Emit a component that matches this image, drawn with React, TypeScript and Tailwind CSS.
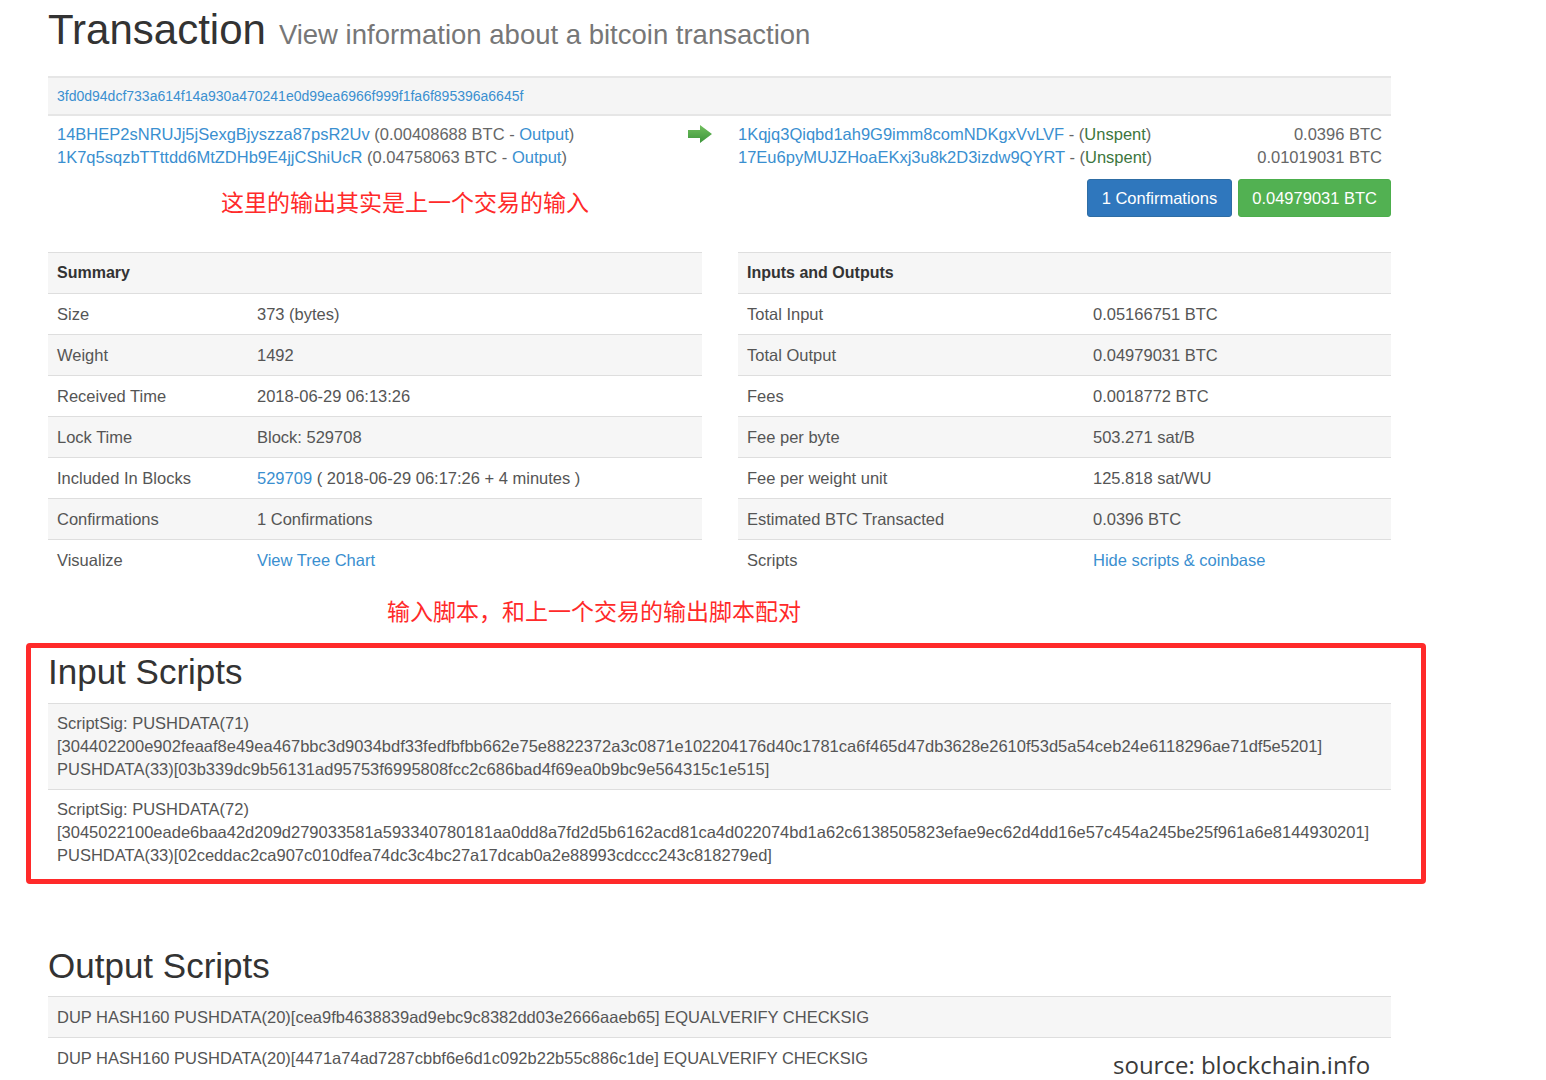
import React from "react";

const LINK = "text-[#3a8fd0]";

interface Row {
  label: string;
  value: React.ReactNode;
}

const summaryRows: Row[] = [
  { label: "Size", value: "373 (bytes)" },
  { label: "Weight", value: "1492" },
  { label: "Received Time", value: "2018-06-29 06:13:26" },
  { label: "Lock Time", value: "Block: 529708" },
  {
    label: "Included In Blocks",
    value: (
      <>
        <span className={LINK}>529709</span> ( 2018-06-29 06:17:26 + 4 minutes )
      </>
    ),
  },
  { label: "Confirmations", value: "1 Confirmations" },
  { label: "Visualize", value: <span className={LINK}>View Tree Chart</span> },
];

const ioRows: Row[] = [
  { label: "Total Input", value: "0.05166751 BTC" },
  { label: "Total Output", value: "0.04979031 BTC" },
  { label: "Fees", value: "0.0018772 BTC" },
  { label: "Fee per byte", value: "503.271 sat/B" },
  { label: "Fee per weight unit", value: "125.818 sat/WU" },
  { label: "Estimated BTC Transacted", value: "0.0396 BTC" },
  { label: "Scripts", value: <span className={LINK}>Hide scripts &amp; coinbase</span> },
];

const inputScripts = [
  [
    "ScriptSig: PUSHDATA(71)",
    "[304402200e902feaaf8e49ea467bbc3d9034bdf33fedfbfbb662e75e8822372a3c0871e102204176d40c1781ca6f465d47db3628e2610f53d5a54ceb24e6118296ae71df5e5201]",
    "PUSHDATA(33)[03b339dc9b56131ad95753f6995808fcc2c686bad4f69ea0b9bc9e564315c1e515]",
  ],
  [
    "ScriptSig: PUSHDATA(72)",
    "[3045022100eade6baa42d209d279033581a593340780181aa0dd8a7fd2d5b6162acd81ca4d022074bd1a62c6138505823efae9ec62d4dd16e57c454a245be25f961a6e8144930201]",
    "PUSHDATA(33)[02ceddac2ca907c010dfea74dc3c4bc27a17dcab0a2e88993cdccc243c818279ed]",
  ],
];

const outputScripts = [
  "DUP HASH160 PUSHDATA(20)[cea9fb4638839ad9ebc9c8382dd03e2666aaeb65] EQUALVERIFY CHECKSIG",
  "DUP HASH160 PUSHDATA(20)[4471a74ad7287cbbf6e6d1c092b22b55c886c1de] EQUALVERIFY CHECKSIG",
];

function InfoTable({ title, rows, labelWidth }: { title: string; rows: Row[]; labelWidth: string }) {
  return (
    <div className="text-[16.5px] leading-[24px] text-[#555]">
      <div className="border-t border-[#dedede] bg-[#f6f6f6] px-[9px] py-[8px] font-bold text-[16px] text-[#333]">
        {title}
      </div>
      {rows.map((r, i) => (
        <div
          key={r.label}
          className={`flex border-t border-[#dedede] py-[8px] ${i % 2 === 1 ? "bg-[#f6f6f6]" : "bg-white"}`}
        >
          <div className={`${labelWidth} shrink-0 px-[9px]`}>{r.label}</div>
          <div className="px-[9px]">{r.value}</div>
        </div>
      ))}
    </div>
  );
}

function GreenArrow() {
  return (
    <svg width="24" height="18" viewBox="0 0 24 18">
      <defs>
        <linearGradient id="ga" x1="0" y1="0" x2="0" y2="1">
          <stop offset="0" stopColor="#72c05f" />
          <stop offset="1" stopColor="#3d953b" />
        </linearGradient>
      </defs>
      <path d="M0 5 H12 V0 L24 9 L12 18 V13 H0 Z" fill="url(#ga)" />
    </svg>
  );
}

export default function App() {
  return (
    <main className="relative h-[1080px] w-[1546px] overflow-hidden bg-white font-['Liberation_Sans',Arial,sans-serif]">
      <div className="ml-[48px] w-[1343px] pt-[7px]">
        <h1 className="flex items-baseline leading-[46px]">
          <span className="text-[42px] text-[#333]">Transaction</span>
          <span className="ml-[13px] text-[27.5px] text-[#777]">View information about a bitcoin transaction</span>
        </h1>

        {/* transaction box */}
        <div className="mt-[18px]">
          <div className="h-[40px] border-y-2 border-[#e6e6e6] bg-[#f5f5f5] px-[9px] text-[14px] leading-[36px] text-[#3a8fd0]">
            3fd0d94dcf733a614f14a930a470241e0d99ea6966f999f1fa6f895396a6645f
          </div>
          <div className="flex px-[9px] pt-[7px] text-[16.5px] leading-[23px] text-[#666]">
            <div className="w-[622px]">
              <div>
                <span className={LINK}>14BHEP2sNRUJj5jSexgBjyszza87psR2Uv</span> (0.00408688 BTC -{" "}
                <span className={LINK}>Output</span>)
              </div>
              <div>
                <span className={LINK}>1K7q5sqzbTTttdd6MtZDHb9E4jjCShiUcR</span> (0.04758063 BTC -{" "}
                <span className={LINK}>Output</span>)
              </div>
            </div>
            <div className="w-[59px] pl-[9px] pt-[2px]">
              <GreenArrow />
            </div>
            <div className="flex-1">
              <div className="flex justify-between">
                <span>
                  <span className={LINK}>1Kqjq3Qiqbd1ah9G9imm8comNDKgxVvLVF</span> - (
                  <span className="text-[#3c763d]">Unspent</span>)
                </span>
                <span>0.0396 BTC</span>
              </div>
              <div className="flex justify-between">
                <span>
                  <span className={LINK}>17Eu6pyMUJZHoaEKxj3u8k2D3izdw9QYRT</span> - (
                  <span className="text-[#3c763d]">Unspent</span>)
                </span>
                <span>0.01019031 BTC</span>
              </div>
            </div>
          </div>
          <div className="mt-[10px] flex items-start justify-between">
            <p className="ml-[173px] mt-[10px] font-['Liberation_Sans','Noto_Sans_CJK_SC',sans-serif] text-[23px] leading-[28px] text-[#ff2a2a]">
              这里的输出其实是上一个交易的输入
            </p>
            <div className="flex gap-[6px] text-[16.5px] text-white">
              <span className="flex h-[38px] items-center rounded-[3px] border border-[#2e6da4] bg-[#2f77bd] px-[14px]">
                1 Confirmations
              </span>
              <span className="flex h-[38px] items-center rounded-[3px] border border-[#4cae4c] bg-[#52b152] px-[13px]">
                0.04979031 BTC
              </span>
            </div>
          </div>
        </div>

        {/* summary tables */}
        <div className="mt-[35px] grid grid-cols-[654px_653px] gap-[36px]">
          <InfoTable title="Summary" rows={summaryRows} labelWidth="w-[200px]" />
          <InfoTable title="Inputs and Outputs" rows={ioRows} labelWidth="w-[346px]" />
        </div>

        <p className="ml-[339px] mt-[18px] font-['Liberation_Sans','Noto_Sans_CJK_SC',sans-serif] text-[23px] leading-[28px] text-[#ff2a2a]">
          输入脚本，和上一个交易的输出脚本配对
        </p>

        {/* input scripts, boxed in red */}
        <div className="-ml-[22px] mt-[17px] w-[1400px] rounded-[4px] border-[5px] border-[#ff2a2a] pb-[4px] pl-[17px] pr-[30px] pt-[5px]">
          <h2 className="text-[35px] leading-[38px] text-[#333]">Input Scripts</h2>
          <div className="mt-[12px] text-[16.5px] leading-[23px] text-[#555]">
            {inputScripts.map((lines, i) => (
              <div
                key={i}
                className={`border-t border-[#dedede] px-[9px] py-[8px] ${i === 0 ? "bg-[#f6f6f6]" : "bg-white"}`}
              >
                {lines.map((l) => (
                  <div key={l} className="whitespace-nowrap">
                    {l}
                  </div>
                ))}
              </div>
            ))}
          </div>
        </div>

        {/* output scripts */}
        <h2 className="mt-[63px] text-[35px] leading-[38px] text-[#333]">Output Scripts</h2>
        <div className="mt-[11px] text-[16.5px] leading-[24px] text-[#555]">
          {outputScripts.map((s, i) => (
            <div
              key={s}
              className={`border-t border-[#dedede] px-[9px] py-[8px] ${i === 0 ? "bg-[#f6f6f6]" : "bg-white"}`}
            >
              {s}
            </div>
          ))}
        </div>
      </div>

      <span className="absolute left-[1113px] top-[1048px] font-['Open_Sans',sans-serif] text-[24px] leading-[34px] text-[#3a3a3a]">
        source: blockchain.info
      </span>
    </main>
  );
}
